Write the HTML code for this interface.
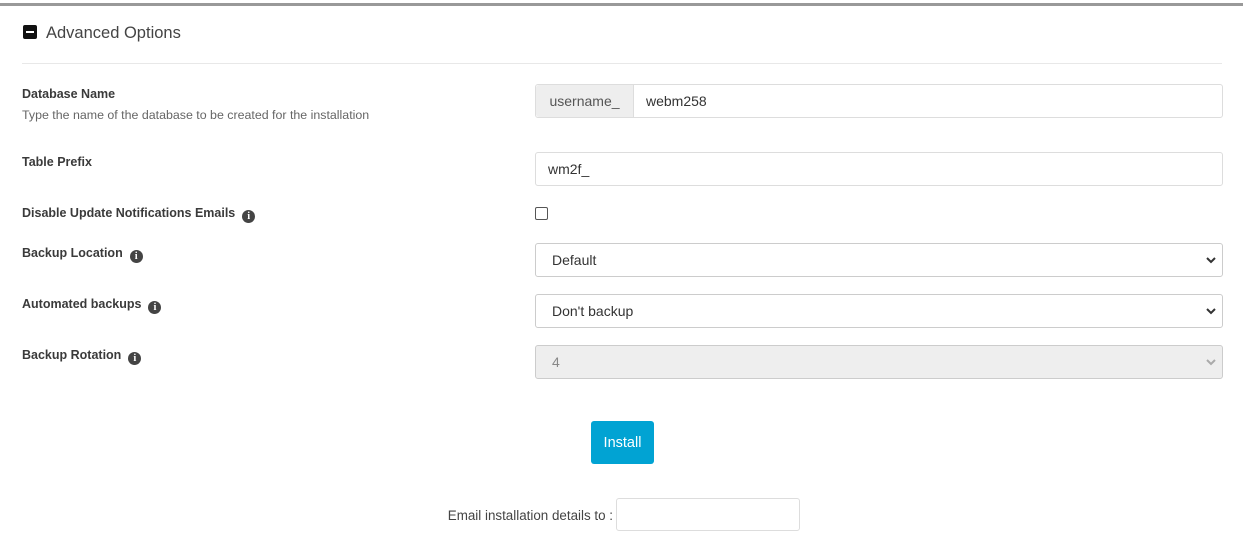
<!DOCTYPE html>
<html><head><meta charset="utf-8"><style>
body{margin:0;width:1247px;height:549px;background:#fff;font-family:"Liberation Sans",sans-serif;color:#333;position:relative;overflow:hidden}
.a{position:absolute}
.lbl{position:absolute;left:22px;font-size:12.5px;font-weight:bold;color:#3a3a3a;line-height:16px;white-space:nowrap}
.info{display:inline-block;width:13px;height:13px;border-radius:50%;background:#444;color:#fff;font-size:10.5px;font-weight:bold;text-align:center;line-height:13px;vertical-align:-2px;margin-left:7px;font-family:"Liberation Serif",serif}
.box{position:absolute;left:535px;width:686px;height:32px;border:1px solid #ddd;border-radius:3px;background:#fff;font-size:14px;line-height:33px;box-sizing:content-box}
.sel .t{position:absolute;left:16px}
.chev{position:absolute;right:6px;top:12px}
</style></head><body>
<div class="a" style="left:0;top:3px;width:1243px;height:3px;background:#999"></div>
<div class="a" style="left:23px;top:25px;width:14px;height:14px;background:#111;border-radius:2px"></div>
<div class="a" style="left:26px;top:31px;width:8px;height:2px;background:#fff"></div>
<div class="a" style="left:46px;top:23px;font-size:16.5px;color:#444;line-height:20px">Advanced Options</div>
<div class="a" style="left:22px;top:63px;width:1200px;height:1px;background:#e8e8e8"></div>

<div class="lbl" style="top:86px">Database Name</div>
<div class="a" style="left:22px;top:108px;font-size:12.4px;color:#666;line-height:14px">Type the name of the database to be created for the installation</div>
<div class="box" style="top:84px">
  <div class="a" style="left:0;top:0;width:97px;height:32px;background:#eee;border-right:1px solid #ddd;border-radius:3px 0 0 3px;color:#555;text-align:center">username_</div>
  <div class="a" style="left:110px;top:0">webm258</div>
</div>

<div class="lbl" style="top:154px">Table Prefix</div>
<div class="box" style="top:152px"><span class="a" style="left:12px">wm2f_</span></div>

<div class="lbl" style="top:205px">Disable Update Notifications Emails<span class="info">i</span></div>
<div class="a" style="left:535px;top:207px;width:11px;height:11px;border:1px solid #555;border-radius:2px"></div>

<div class="lbl" style="top:245px">Backup Location<span class="info">i</span></div>
<div class="box sel" style="top:243px;border-color:#ccc"><span class="t">Default</span><svg class="chev" width="10" height="8" viewBox="0 0 10 8"><path d="M1 2l4 4 4-4" fill="none" stroke="#333" stroke-width="2"/></svg></div>

<div class="lbl" style="top:296px">Automated backups<span class="info">i</span></div>
<div class="box sel" style="top:294px;border-color:#ccc"><span class="t">Don't backup</span><svg class="chev" width="10" height="8" viewBox="0 0 10 8"><path d="M1 2l4 4 4-4" fill="none" stroke="#333" stroke-width="2"/></svg></div>

<div class="lbl" style="top:347px">Backup Rotation<span class="info">i</span></div>
<div class="box sel" style="top:345px;background:#eee;border-color:#ccc;color:#888"><span class="t">4</span><svg class="chev" width="10" height="8" viewBox="0 0 10 8"><path d="M1 2l4 4 4-4" fill="none" stroke="#aaa" stroke-width="2"/></svg></div>

<div class="a" style="left:591px;top:421px;width:63px;height:43px;background:#01a3d3;border-radius:3px;color:#fff;font-size:14.5px;line-height:44px;text-align:center">Install</div>

<div class="a" style="left:380px;width:233px;text-align:right;top:508px;font-size:13.4px;color:#444;line-height:16px">Email installation details to :</div>
<div class="a" style="left:616px;top:498px;width:182px;height:31px;border:1px solid #ddd;border-radius:3px"></div>
</body></html>
